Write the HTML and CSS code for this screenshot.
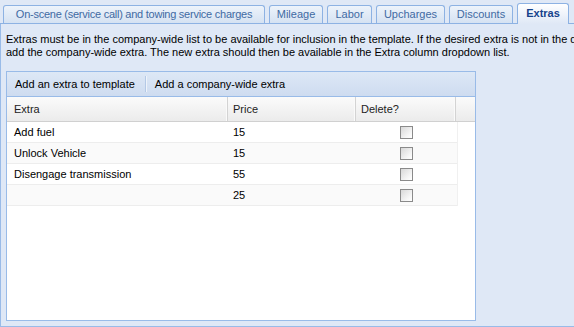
FILE: index.html
```html
<!DOCTYPE html>
<html>

<head>
    <link rel="stylesheet" href="styles.css">
</head>

<body>
    <div class='tabpanel'>
        <div class='tabstrip'>
            <div class='tab tab-onscene'>On-scene (service call) and towing service charges</div>
            <div class='tab tab-mileage'>Mileage</div>
            <div class='tab tab-labor'>Labor</div>
            <div class='tab tab-upcharges'>Upcharges</div>
            <div class='tab tab-discounts'>Discounts</div>
            <div class='tab tab-extras active'>Extras</div>
        </div>

        <div class='tabbody'>
            <p class='note'>Extras must be in the company-wide list to be available for inclusion in the template. If the desired extra is not in the dropdown list,<br>add the company-wide extra. The new extra should then be available in the Extra column dropdown list.</p>

            <div class='grid'>
                <div class='toolbar'>
                    <span class='tbtn'>Add an extra to template</span>
                    <span class='tsep'></span>
                    <span class='tbtn'>Add a company-wide extra</span>
                </div>

                <div class='ghead'>
                    <div class='cell col-extra'>Extra</div>
                    <div class='cell col-price'>Price</div>
                    <div class='cell col-del'>Delete?</div>
                    <div class='cell col-fill'></div>
                </div>

                <div class='gbody'>
                    <div class='grow'>
                        <div class='cell col-extra'>Add fuel</div>
                        <div class='cell col-price'>15</div>
                        <div class='cell col-del'><span class='check'></span></div>
                    </div>
                    <div class='grow alt'>
                        <div class='cell col-extra'>Unlock Vehicle</div>
                        <div class='cell col-price'>15</div>
                        <div class='cell col-del'><span class='check'></span></div>
                    </div>
                    <div class='grow'>
                        <div class='cell col-extra'>Disengage transmission</div>
                        <div class='cell col-price'>55</div>
                        <div class='cell col-del'><span class='check'></span></div>
                    </div>
                    <div class='grow alt'>
                        <div class='cell col-extra'></div>
                        <div class='cell col-price'>25</div>
                        <div class='cell col-del'><span class='check'></span></div>
                    </div>
                </div>
            </div>
        </div>
    </div>
</body>

</html>
```

FILE: styles.css
```css
body {
    font-family: "Liberation Sans", Arial, sans-serif;
    font-size: 11px;
    background: #dfe8f6;
    margin: 0;
    overflow: hidden;
}

.tabpanel {
    width: 574px;
    height: 327px;
}

.tabstrip {
    display: flex;
    align-items: flex-end;
    gap: 4px;
    height: 23px;
    padding: 0 3px;
    border-bottom: 1px solid #8db2e3;
}

.tab {
    box-sizing: border-box;
    height: 18px;
    line-height: 17px;
    text-align: center;
    color: #416aa3;
    background: linear-gradient(#edf3fb, #d5e2f2);
    border: 1px solid #8db2e3;
    border-bottom: none;
    border-radius: 3px 3px 0 0;
    white-space: nowrap;
}

.tab-onscene {
    width: 262px;
    letter-spacing: -0.25px;
}

.tab-mileage {
    width: 54px;
}

.tab-labor {
    width: 45px;
}

.tab-upcharges {
    width: 69px;
}

.tab-discounts {
    width: 64px;
}

.tab-extras {
    width: 52px;
}

.tab.active {
    height: 21px;
    line-height: 19px;
    margin-bottom: -1px;
    font-weight: bold;
    color: #15428b;
    background: linear-gradient(#ffffff, #dfe8f6);
}

.tabbody {
    height: 303px;
    border-left: 1px solid #99bbe8;
    border-bottom: 1px solid #99bbe8;
    padding: 9px 0 0 5px;
    box-sizing: border-box;
}

.note {
    margin: 0 0 12px;
    line-height: 13px;
    white-space: nowrap;
    color: #000;
}

.grid {
    width: 470px;
    height: 250px;
    box-sizing: border-box;
    border: 1px solid #99bbe8;
    background: #fff;
}

.toolbar {
    display: flex;
    align-items: center;
    height: 24px;
    padding-left: 8px;
    background: linear-gradient(#dde8f6, #cedcf0);
    border-bottom: 1px solid #99bbe8;
    color: #000;
}

.tsep {
    width: 1px;
    height: 16px;
    margin: 0 9px 0 10px;
    background: #b4c9e6;
    box-shadow: 1px 0 0 #eef3fa;
}

.ghead {
    display: flex;
    height: 24px;
    background: linear-gradient(#fbfbfb, #ebebeb);
    border-bottom: 1px solid #d0d0d0;
    color: #222;
}

.ghead .cell {
    line-height: 24px;
    border-right: 1px solid #d3d3d3;
    box-shadow: inset -1px 0 0 #fafafa;
}

.ghead .col-fill {
    border-right: none;
    box-shadow: none;
}

.cell {
    box-sizing: border-box;
    padding-left: 5px;
    white-space: nowrap;
}

.col-extra {
    width: 221px;
    padding-left: 7px;
}

.col-price {
    width: 128px;
}

.col-del {
    width: 100px;
    padding-left: 0;
    display: flex;
    justify-content: center;
    align-items: center;
}

.ghead .col-del {
    display: block;
    padding-left: 5px;
}

.col-fill {
    flex: 1;
}

.gbody {
    width: 450px;
    border-right: 1px solid #f0f0f0;
}

.grow {
    display: flex;
    height: 21px;
    line-height: 20px;
    border-bottom: 1px solid #ededed;
    box-sizing: border-box;
    color: #000;
}

.grow.alt {
    background: #fafafa;
}

.check {
    width: 11px;
    height: 11px;
    border: 1px solid #8a8a8a;
    background: linear-gradient(135deg, #d8d8d8, #f6f6f6 70%, #ffffff);
}
```
